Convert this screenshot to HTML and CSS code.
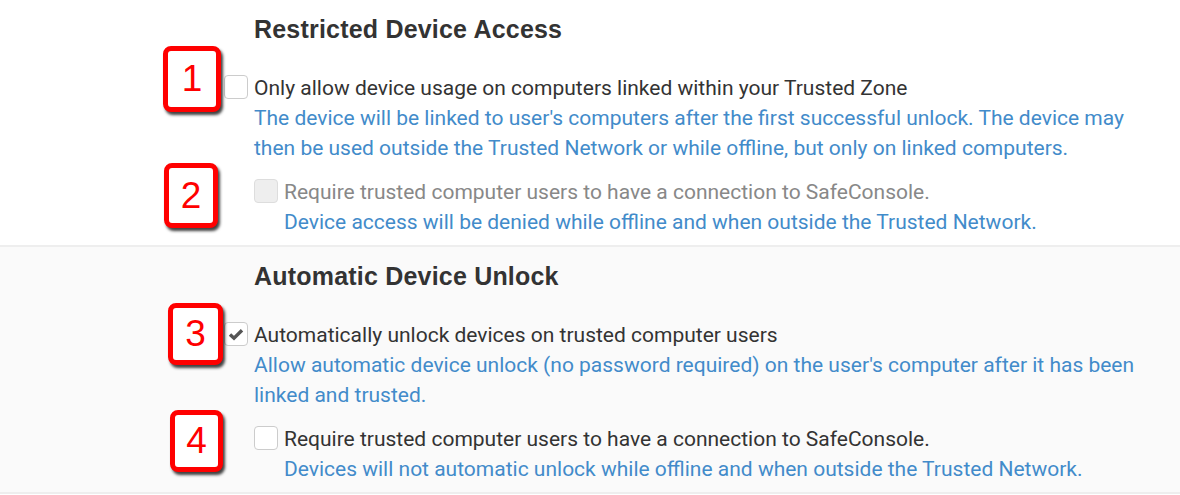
FILE: index.html
```html
<!DOCTYPE html>
<html>
<head>
<meta charset="utf-8">
<link rel="stylesheet" href="styles.css">
</head>
<body>
<div class="page">
  <section class="panel">
    <h2 class="title">Restricted Device Access</h2>
    <div class="option">
      <span class="box"></span>
      <div class="label">
        <div class="main">Only allow device usage on computers linked within your Trusted Zone</div>
        <div class="help">The device will be linked to user's computers after the first successful unlock. The device may then be used outside the Trusted Network or while offline, but only on linked computers.</div>
      </div>
    </div>
    <div class="option sub">
      <span class="box disabled"></span>
      <div class="label">
        <div class="main muted">Require trusted computer users to have a connection to SafeConsole.</div>
        <div class="help">Device access will be denied while offline and when outside the Trusted Network.</div>
      </div>
    </div>
  </section>
  <section class="panel alt">
    <h2 class="title">Automatic Device Unlock</h2>
    <div class="option">
      <span class="box checked"><svg viewBox="0 0 16 16" width="16" height="16"><path d="M2 8.4 L6 12.2 L14 4.2" fill="none" stroke="#555555" stroke-width="3.4" stroke-linecap="butt" stroke-linejoin="miter"/></svg></span>
      <div class="label">
        <div class="main">Automatically unlock devices on trusted computer users</div>
        <div class="help">Allow automatic device unlock (no password required) on the user's computer after it has been linked and trusted.</div>
      </div>
    </div>
    <div class="option sub">
      <span class="box"></span>
      <div class="label">
        <div class="main">Require trusted computer users to have a connection to SafeConsole.</div>
        <div class="help">Devices will not automatic unlock while offline and when outside the Trusted Network.</div>
      </div>
    </div>
  </section>

  <div class="badge b1">1</div>
  <div class="badge b2">2</div>
  <div class="badge b3">3</div>
  <div class="badge b4">4</div>
</div>
</body>
</html>
```

FILE: styles.css
```css
html, body {
  margin: 0;
  padding: 0;
  background: #ffffff;
}
.page {
  position: relative;
  width: 1180px;
  font-family: Roboto, "Liberation Sans", sans-serif;
  font-size: 21px;
  color: #333333;
}
.panel {
  padding: 14px 0 8px 224px;
  border-bottom: 2px solid #eeeeee;
  background: #ffffff;
}
.panel.alt {
  background: #fafafa;
}
.title {
  margin: 0 0 29px 30px;
  font-family: "Liberation Sans", Arial, sans-serif;
  font-weight: bold;
  font-size: 25px;
  line-height: 30px;
  letter-spacing: 0.2px;
  color: #333333;
}
.option {
  display: flex;
  align-items: flex-start;
  gap: 6px;
  width: 922px;
  margin-bottom: 14px;
}
.option:last-child {
  margin-bottom: 0;
}
.option.sub {
  padding-left: 30px;
  width: 892px;
}
.box {
  flex: 0 0 auto;
  box-sizing: border-box;
  width: 24px;
  height: 24px;
  margin-top: 2px;
  border: 1px solid #cccccc;
  border-radius: 4px;
  background: #ffffff;
  display: flex;
  align-items: center;
  justify-content: center;
}
.box.disabled {
  background: #eeeeee;
  border-color: #dddddd;
}
.label {
  flex: 1 1 auto;
  line-height: 30px;
}
.main {
  color: #333333;
}
.main.muted {
  color: #888888;
}
.help {
  color: #428bca;
}
.badge {
  position: absolute;
  box-sizing: border-box;
  border: 5px solid #ff0000;
  border-radius: 8px;
  background: #ffffff;
  box-shadow: 2px 3px 3px rgba(0, 0, 0, 0.75);
  color: #ff0000;
  font-family: "Liberation Sans", Arial, sans-serif;
  font-size: 37px;
  display: flex;
  align-items: center;
  justify-content: center;
}
.b1 { left: 163px; top: 46px; width: 58px; height: 66px; }
.b2 { left: 164px; top: 163px; width: 54px; height: 65px; }
.b3 { left: 168px; top: 303px; width: 55px; height: 62px; }
.b4 { left: 170px; top: 410px; width: 53px; height: 62px; }
```
